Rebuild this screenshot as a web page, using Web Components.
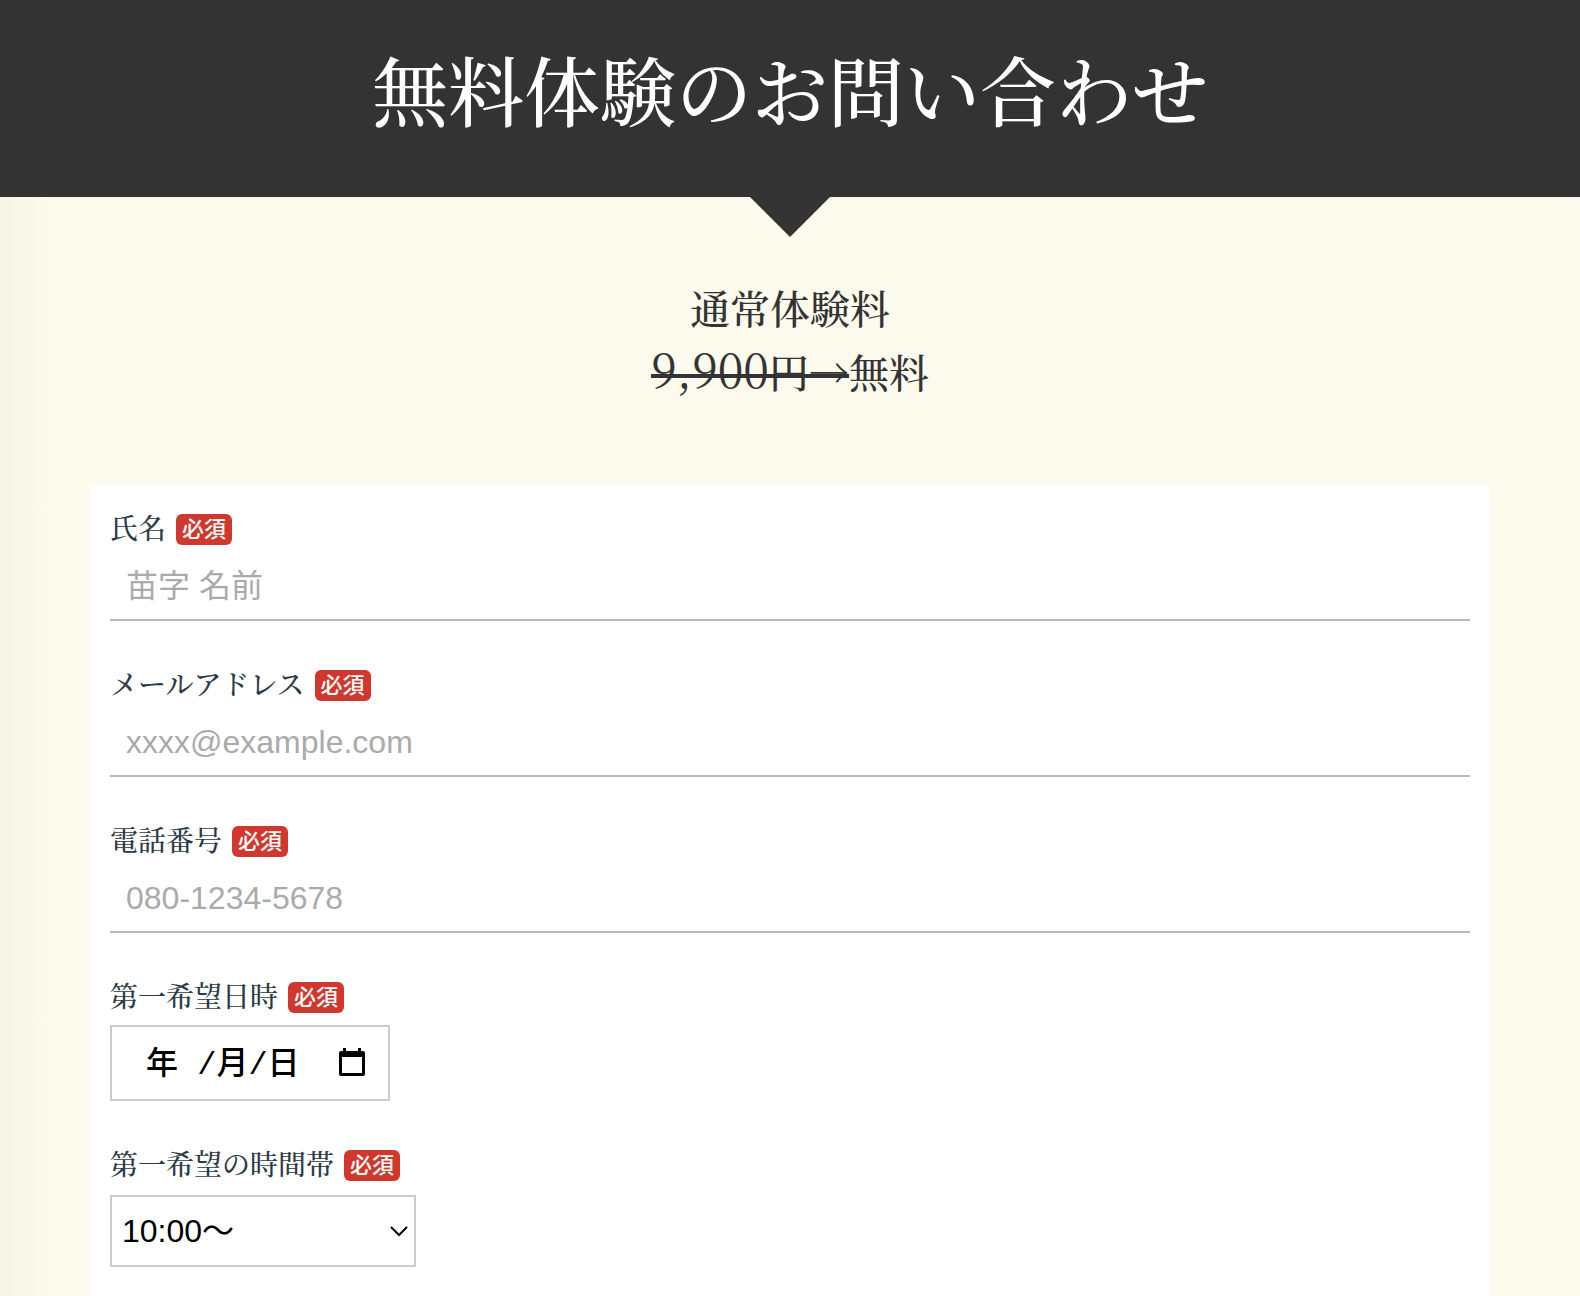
<!DOCTYPE html>
<html lang="ja">
<head>
<meta charset="UTF-8">
<meta name="viewport" content="width=device-width, initial-scale=1.0">
<title>無料体験のお問い合わせ</title>
<style>
    body {
        display: flex;
        flex-direction: column;
        margin: 0;
        min-height: 100vh;
        color: #333;
        background: linear-gradient(to right, #f7f5e8, #fcfaed 50px);
        --serif: "Noto Serif CJK JP", "Noto Serif JP", "Noto Sans CJK JP", serif;
        --sans: "Liberation Sans", "Noto Sans CJK JP", sans-serif;
        font-family: var(--serif);
    }

    main {
        display: flex;
        flex: 1;
        flex-direction: column;
    }

    contact-form {
        flex: 1;
    }
</style>
</head>
<body>
<page-header>無料体験のお問い合わせ</page-header>
<main>
    <price-note before="通常体験料" amount="9,900" unit="円→">無料</price-note>
    <contact-form>
        <text-field label="氏名" name="name" type="text" placeholder="苗字 名前"></text-field>
        <text-field label="メールアドレス" name="email" type="email" placeholder="xxxx@example.com"></text-field>
        <text-field label="電話番号" name="tel" type="tel" placeholder="080-1234-5678"></text-field>
        <date-field label="第一希望日時" name="date1" placeholder="年 /月/日"></date-field>
        <time-field label="第一希望の時間帯" name="time1" options="10:00〜,11:00〜,12:00〜,13:00〜,14:00〜,15:00〜"></time-field>
    </contact-form>
</main>

<script>
class PageHeader extends HTMLElement {
    connectedCallback() {
        this.attachShadow({ mode: 'open' });
        this.shadowRoot.innerHTML = `
            <style>
                :host {
                    display: block;
                    position: relative;
                    padding: 33px 20px 52px;
                    background: #333;
                    color: #fff;
                    text-align: center;
                }

                :host::after {
                    content: "";
                    position: absolute;
                    top: 100%;
                    left: 50%;
                    margin-left: -40px;
                    border: 40px solid transparent;
                    border-top-color: #333;
                    border-bottom-width: 0;
                }

                h1 {
                    margin: 0;
                    font-size: 76px;
                    font-weight: 500;
                    line-height: 112px;
                }
            </style>
            <header><h1><slot></slot></h1></header>
        `;
    }
}

class PriceNote extends HTMLElement {
    connectedCallback() {
        this.attachShadow({ mode: 'open' });
        this.shadowRoot.innerHTML = `
            <style>
                :host {
                    display: block;
                    padding: 78px 20px 82px;
                    text-align: center;
                }

                p {
                    margin: 0;
                    font-size: 40px;
                    font-weight: 500;
                    line-height: 64px;
                }

                /* one straight line across both text sizes */
                del {
                    background: linear-gradient(#333, #333) no-repeat 0 60% / 100% 4px;
                    text-decoration: none;
                }

                .amount {
                    font-size: 46px;
                    font-weight: 400;
                    line-height: 1;
                }
            </style>
            <p>${this.getAttribute('before')}</p>
            <p><del><span class="amount">${this.getAttribute('amount')}</span>${this.getAttribute('unit')}</del><slot></slot></p>
        `;
    }
}

class ContactForm extends HTMLElement {
    connectedCallback() {
        this.attachShadow({ mode: 'open' });
        this.shadowRoot.innerHTML = `
            <style>
                :host {
                    display: block;
                    box-sizing: border-box;
                    width: 100%;
                    max-width: 1400px;
                    margin: 0 auto;
                    padding: 20px 20px 0;
                    background: #fff;
                }

                form {
                    display: flex;
                    flex-direction: column;
                    gap: 40px;
                }
            </style>
            <form><slot></slot></form>
        `;
    }
}

class RequiredBadge extends HTMLElement {
    connectedCallback() {
        this.attachShadow({ mode: 'open' });
        this.shadowRoot.innerHTML = `
            <style>
                :host {
                    display: block;
                    padding: 0 6px;
                    border-radius: 6px;
                    background: #d0372d;
                    color: #fff;
                    font-family: var(--sans);
                    font-size: 22px;
                    font-weight: 500;
                    line-height: 31px;
                }
            </style>
            <slot></slot>
        `;
    }
}

// Label row shared by every field; subclasses supply the control
class FormField extends HTMLElement {
    connectedCallback() {
        this.attachShadow({ mode: 'open' });
        this.shadowRoot.innerHTML = `
            <style>
                :host {
                    display: block;
                }

                label {
                    display: flex;
                    align-items: center;
                    gap: 10px;
                    height: 48px;
                    color: #2d3a47;
                    font-size: 28px;
                    font-weight: 500;
                    line-height: 44px;
                }

                label span {
                    padding-bottom: 4px;
                }

                input, select {
                    box-sizing: border-box;
                    margin: 0;
                    border: 0;
                    border-radius: 0;
                    background: transparent;
                    color: #000;
                    font-family: var(--sans);
                    font-size: 32px;
                    outline: none;
                }
                ${this.styles()}
            </style>
            <label for="control"><span>${this.getAttribute('label')}</span><required-badge>必須</required-badge></label>
            ${this.control()}
        `;
    }

    styles() {
        return '';
    }

    control() {
        return '';
    }
}

class TextField extends FormField {
    styles() {
        return `
                input {
                    display: block;
                    width: 100%;
                    height: 68px;
                    padding: 0 16px;
                    border-bottom: 2px solid #b9b9b9;
                }

                input::placeholder {
                    color: #aaa;
                }
        `;
    }

    control() {
        return `<input id="control" type="${this.getAttribute('type')}" name="${this.getAttribute('name')}" placeholder="${this.getAttribute('placeholder')}" required>`;
    }
}

class DateField extends FormField {
    styles() {
        return `
                .box {
                    display: flex;
                    align-items: center;
                    box-sizing: border-box;
                    width: 280px;
                    max-width: 100%;
                    height: 76px;
                    margin-top: 4px;
                    padding: 0 20px 0 34px;
                    border: 2px solid #ccc;
                }

                input {
                    flex: 1;
                    min-width: 0;
                    padding: 4px 0 0;
                    font-family: "Liberation Mono", "Noto Sans CJK JP", monospace;
                    font-weight: 500;
                }

                input::placeholder {
                    color: #000;
                }

                button {
                    display: block;
                    padding: 0;
                    border: 0;
                    background: none;
                    cursor: pointer;
                }

                svg {
                    display: block;
                }
        `;
    }

    control() {
        return `
            <div class="box">
                <input id="control" type="text" name="${this.getAttribute('name')}" placeholder="${this.getAttribute('placeholder')}" required>
                <button type="button" aria-label="カレンダー">
                    <svg width="32" height="32" viewBox="0 0 32 32">
                        <path d="M7 1h3v3h12V1h3v3h2a2 2 0 0 1 2 2v21a2 2 0 0 1-2 2H5a2 2 0 0 1-2-2V6a2 2 0 0 1 2-2h2zM6 10v16h20V10z" fill="#000" fill-rule="evenodd"/>
                    </svg>
                </button>
            </div>
        `;
    }
}

class TimeField extends FormField {
    styles() {
        return `
                .box {
                    display: grid;
                    align-items: center;
                    width: 306px;
                    max-width: 100%;
                    margin-top: 6px;
                }

                select, svg {
                    grid-area: 1 / 1;
                }

                select {
                    appearance: none;
                    width: 100%;
                    height: 72px;
                    padding: 0 32px 0 10px;
                    border: 2px solid #ccc;
                }

                svg {
                    justify-self: end;
                    margin-right: 7px;
                    pointer-events: none;
                }
        `;
    }

    control() {
        const options = this.getAttribute('options').split(',');
        return `
            <div class="box">
                <select id="control" name="${this.getAttribute('name')}" required>
                    ${options.map(o => `<option>${o}</option>`).join('')}
                </select>
                <svg width="20" height="12" viewBox="0 0 20 12" fill="none" stroke="#000" stroke-width="2">
                    <path d="M2 2l8 8 8-8"/>
                </svg>
            </div>
        `;
    }
}

customElements.define('page-header', PageHeader);
customElements.define('price-note', PriceNote);
customElements.define('contact-form', ContactForm);
customElements.define('required-badge', RequiredBadge);
customElements.define('text-field', TextField);
customElements.define('date-field', DateField);
customElements.define('time-field', TimeField);
</script>
</body>
</html>
